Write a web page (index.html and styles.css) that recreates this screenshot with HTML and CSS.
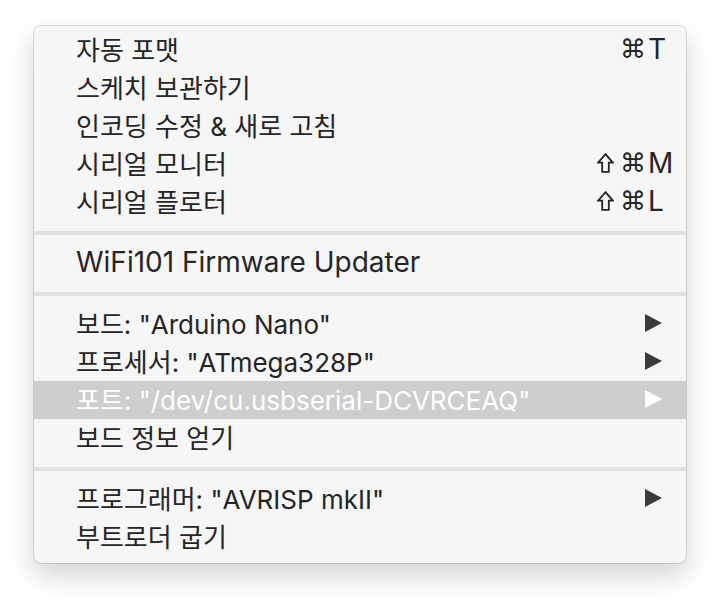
FILE: index.html
```html
<html>
<head>
    <title>Tools menu</title>
    <link rel="stylesheet" href="styles.css">
</head>
<body>
    <div class="menu">
        <ul class="group">
            <li class="item"><span class="label">자동 포맷</span>
                <span class="shortcut"><span class="mods"><span class="cmd">⌘</span></span><span class="key">T</span></span></li>
            <li class="item"><span class="label">스케치 보관하기</span></li>
            <li class="item"><span class="label">인코딩 수정 &amp; 새로 고침</span></li>
            <li class="item"><span class="label">시리얼 모니터</span>
                <span class="shortcut"><span class="mods"><svg class="shift" viewBox="0 0 17 20"><path d="M8.5 1.2 L15.8 9.6 H11.8 V18.9 H5.2 V9.6 H1.2 Z"/></svg><span class="cmd">⌘</span></span><span class="key">M</span></span></li>
            <li class="item"><span class="label">시리얼 플로터</span>
                <span class="shortcut"><span class="mods"><svg class="shift" viewBox="0 0 17 20"><path d="M8.5 1.2 L15.8 9.6 H11.8 V18.9 H5.2 V9.6 H1.2 Z"/></svg><span class="cmd">⌘</span></span><span class="key">L</span></span></li>
        </ul>
        <div class="sep"></div>
        <ul class="group">
            <li class="item"><span class="label en">WiFi101 Firmware Updater</span></li>
        </ul>
        <div class="sep"></div>
        <ul class="group">
            <li class="item"><span class="label">보드: "Arduino Nano"</span><span class="arrow"></span></li>
            <li class="item"><span class="label">프로세서: "ATmega328P"</span><span class="arrow"></span></li>
            <li class="item active"><span class="label">포트: "/dev/cu.usbserial-DCVRCEAQ"</span><span class="arrow"></span></li>
            <li class="item"><span class="label">보드 정보 얻기</span></li>
        </ul>
        <div class="sep"></div>
        <ul class="group">
            <li class="item"><span class="label">프로그래머: "AVRISP mkII"</span><span class="arrow"></span></li>
            <li class="item"><span class="label">부트로더 굽기</span></li>
        </ul>
    </div>
</body>
</html>
```

FILE: styles.css
```css
body {
    margin: 0;
    background: #ffffff;
    font-family: Inter, "Noto Sans CJK KR", sans-serif;
}

.menu {
    margin: 26px 0 0 34px;
    width: 652px;
    height: 537px;
    box-sizing: border-box;
    padding: 5px 0 9px 0;
    background: #f6f6f6;
    border-radius: 7px;
    box-shadow: 0 0 0 1px rgba(0, 0, 0, 0.12), 0 12px 28px rgba(0, 0, 0, 0.18);
}

.group {
    list-style: none;
    margin: 0;
    padding: 0;
}

.item {
    display: flex;
    align-items: center;
    box-sizing: border-box;
    height: 38px;
    padding: 0 13px 3px 42px;
    font-size: 26px;
    color: #252525;
}

.label {
    flex: 1;
    white-space: nowrap;
}

/* plain latin rows are set a little larger */
.label.en {
    font-size: 28px;
}

.item.active {
    background: #cecece;
    color: #ffffff;
}

.shortcut {
    display: flex;
    align-items: center;
}

.mods {
    display: flex;
    align-items: center;
    justify-content: flex-end;
}

.shift {
    width: 17px;
    height: 20px;
    margin-right: 6px;
    fill: none;
    stroke: #252525;
    stroke-width: 1.8;
}

.cmd {
    font-family: "DejaVu Sans", sans-serif;
    font-size: 26px;
}

.key {
    width: 25px;
    padding-left: 2px;
    font-size: 28px;
}

.arrow {
    width: 0;
    height: 0;
    margin-right: 11px;
    border-top: 9px solid transparent;
    border-bottom: 9px solid transparent;
    border-left: 17px solid #3a3a3a;
}

.item.active .arrow {
    border-left-color: #ffffff;
}

.sep {
    height: 4px;
    margin: 10px 0 9px 0;
    background: #e2e2e2;
}
```
